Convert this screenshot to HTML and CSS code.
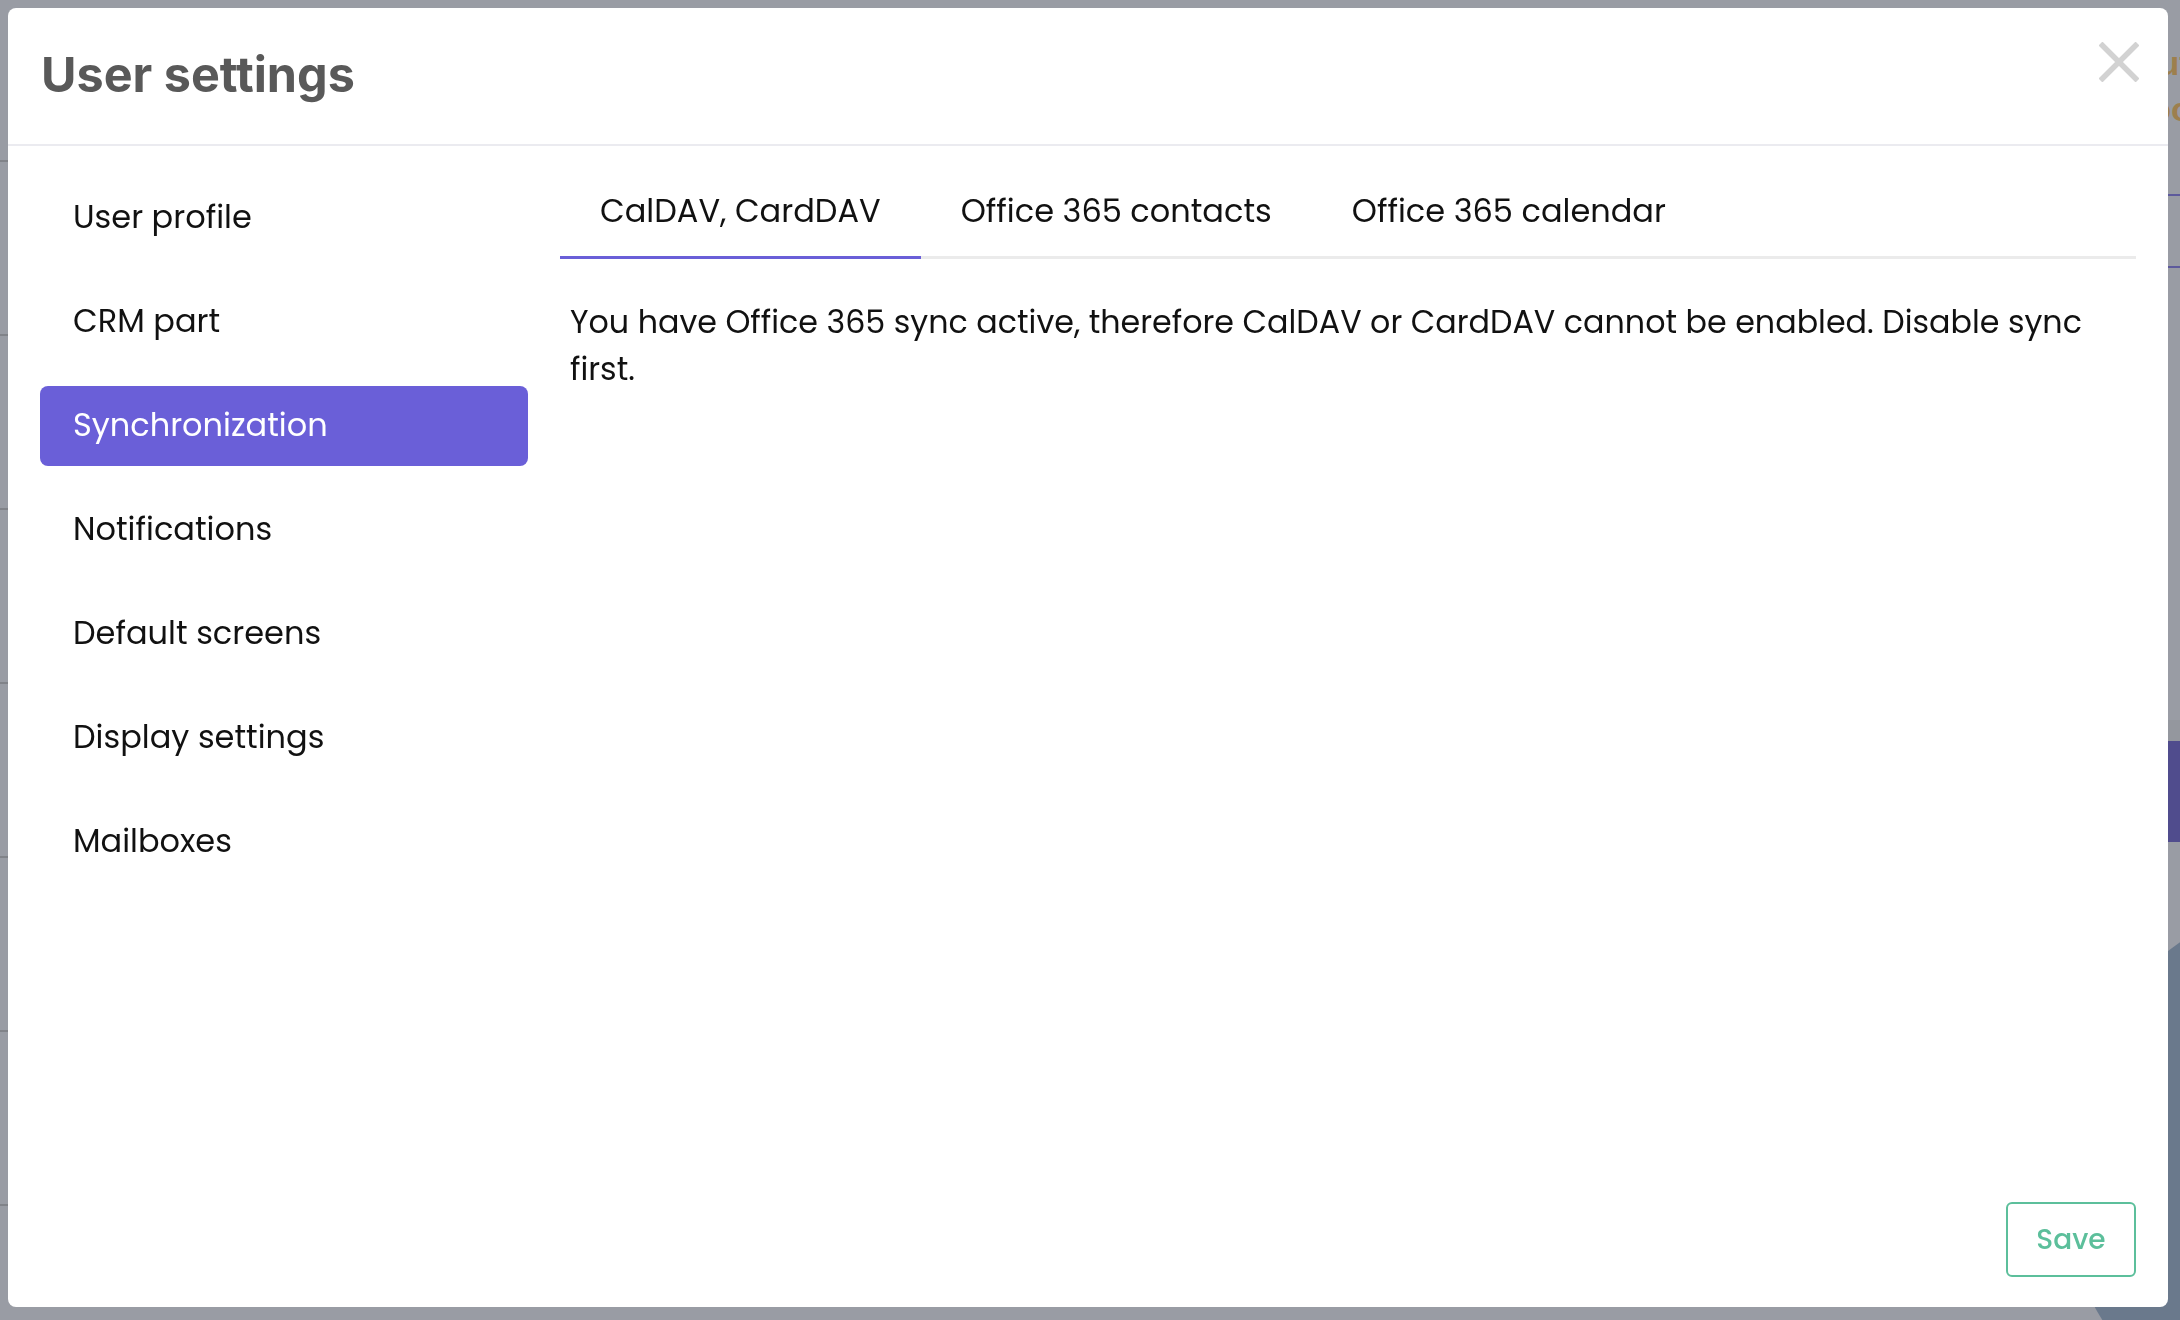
FILE: index.html
```html
<!DOCTYPE html>
<html lang="en">
<head>
    <meta charset="UTF-8">
    <meta name="viewport" content="width=device-width, initial-scale=1.0">
    <title>User settings</title>
    <link rel="stylesheet" href="styles.css">
</head>
<body>
    <!-- Page behind the dialog (dimmed) -->
    <div class="app">
        <aside class="app-list">
            <div class="app-row"></div>
            <div class="app-row"></div>
            <div class="app-row"></div>
            <div class="app-row"></div>
            <div class="app-row"></div>
            <div class="app-row"></div>
            <div class="app-row"></div>
            <div class="app-row"></div>
        </aside>
        <div class="app-main"></div>
        <aside class="app-side">
            <div class="app-side-title">Output<br>Tool</div>
            <div class="app-side-row"></div>
            <div class="app-side-shade"></div>
            <div class="app-side-button"></div>
            <div class="app-side-avatar"></div>
        </aside>
    </div>

    <div class="overlay">
        <div class="modal">
            <header class="modal-header">
                <h1>User settings</h1>
                <button class="close-button" aria-label="Close">
                    <svg width="40" height="40" viewBox="0 0 40 40">
                        <path d="M1.5 1.5 L38.5 38.5 M38.5 1.5 L1.5 38.5" stroke="#d2d2d2" stroke-width="5.5" fill="none"/>
                    </svg>
                </button>
            </header>

            <div class="modal-body">
                <nav class="settings-nav">
                    <a href="#" class="nav-item">User profile</a>
                    <a href="#" class="nav-item">CRM part</a>
                    <a href="#" class="nav-item active">Synchronization</a>
                    <a href="#" class="nav-item">Notifications</a>
                    <a href="#" class="nav-item">Default screens</a>
                    <a href="#" class="nav-item">Display settings</a>
                    <a href="#" class="nav-item">Mailboxes</a>
                </nav>

                <section class="settings-content">
                    <div class="tabs">
                        <div class="tab active">CalDAV, CardDAV</div>
                        <div class="tab">Office 365 contacts</div>
                        <div class="tab">Office 365 calendar</div>
                    </div>
                    <p class="tab-message">You have Office 365 sync active, therefore CalDAV or CardDAV cannot be enabled. Disable sync first.</p>
                </section>
            </div>

            <footer class="modal-footer">
                <button class="save-button">Save</button>
            </footer>
        </div>
    </div>
</body>
</html>
```

FILE: styles.css
```css
/* General Styles */
body {
    margin: 0;
    padding: 0;
    background-color: #999ca4;
    font-family: "Poppins", "DejaVu Sans", sans-serif;
    overflow: hidden;
}

/* Dimmed page behind the dialog */
.app {
    display: flex;
    height: 1320px;
    overflow: hidden;
}

.app-list {
    width: 220px;
    display: flex;
    flex-direction: column;
}

.app-row {
    flex-shrink: 0;
    height: 172px;
    border-bottom: 2px solid #818389;
}

.app-row:first-child {
    height: 160px;
}

.app-main {
    flex: 1;
}

.app-side {
    width: 140px;
    flex-shrink: 0;
}

.app-side-title {
    padding-top: 40px;
    padding-left: 92px;
    font-family: "Liberation Sans", sans-serif;
    font-weight: 700;
    font-size: 34px;
    line-height: 46px;
    color: #9d7f4d;
    white-space: nowrap;
}

.app-side-row {
    margin-top: 62px;
    height: 70px;
    border-top: 2px solid #5d5a9c;
    border-bottom: 2px solid #5d5a9c;
}

.app-side-shade {
    margin-top: 452px;
    height: 21px;
    background-color: #94979e;
}

.app-side-button {
    height: 101px;
    background-color: #504c8d;
}

.app-side-avatar {
    margin-top: 50px;
    margin-left: 20px;
    width: 560px;
    height: 560px;
    border-radius: 50%;
    background-color: #6a798c;
}

/* Dialog */
.overlay {
    position: fixed;
    inset: 0;
    display: flex;
    padding: 8px 12px 13px 8px;
}

.modal {
    flex: 1;
    display: flex;
    flex-direction: column;
    background-color: #ffffff;
    border-radius: 8px;
}

.modal-header {
    display: flex;
    justify-content: space-between;
    align-items: flex-start;
    padding: 38px 29px 40px 33px;
    border-bottom: 2px solid #ebebf0;
}

.modal-header h1 {
    margin: 0;
    font-family: "Inter", "Liberation Sans", sans-serif;
    font-weight: 700;
    font-size: 48.5px;
    line-height: 58px;
    color: #595959;
}

.close-button {
    margin-top: -4px;
    padding: 0;
    border: none;
    background: none;
    cursor: pointer;
    line-height: 0;
}

.modal-body {
    flex: 1;
    display: flex;
    gap: 32px;
    padding: 32px 32px 0 32px;
}

/* Left menu */
.settings-nav {
    width: 488px;
    flex-shrink: 0;
    display: flex;
    flex-direction: column;
    gap: 24px;
}

.nav-item {
    padding: 15px 33px 17px;
    border-radius: 8px;
    font-size: 32px;
    line-height: 48px;
    color: #111111;
    text-decoration: none;
}

.nav-item.active {
    background-color: #6a5fd8;
    color: #ffffff;
}

/* Tabs */
.settings-content {
    flex: 1;
}

.tabs {
    display: flex;
    border-bottom: 3px solid #ebebeb;
}

.tab {
    padding: 9px 40px 21px;
    margin-bottom: -3px;
    border-bottom: 3px solid transparent;
    font-size: 32px;
    line-height: 48px;
    color: #111111;
    cursor: pointer;
}

.tab.active {
    border-bottom-color: #6a5fd8;
}

.tab-message {
    margin: 0;
    padding: 40px 10px 0;
    font-size: 31.75px;
    line-height: 47px;
    color: #111111;
}

/* Footer */
.modal-footer {
    display: flex;
    justify-content: flex-end;
    padding: 0 32px 30px;
}

.save-button {
    width: 130px;
    height: 75px;
    padding: 0;
    border: 2px solid #5cbf9b;
    border-radius: 6px;
    background-color: #ffffff;
    color: #5cbf9b;
    font-family: "Poppins", "DejaVu Sans", sans-serif;
    font-size: 28px;
    font-weight: 500;
    cursor: pointer;
}
```
